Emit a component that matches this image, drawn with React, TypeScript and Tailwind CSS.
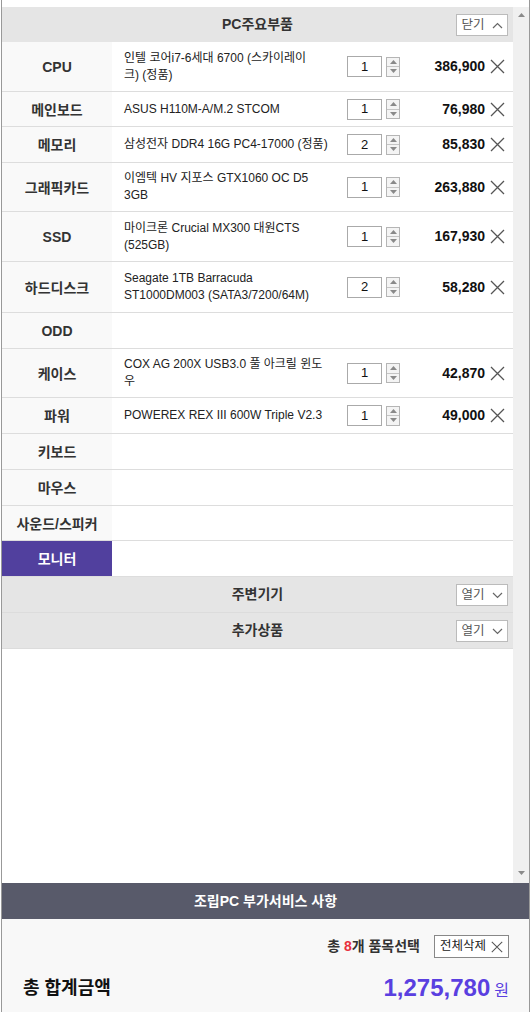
import React from "react";

type Part = {
  label: string;
  h: string;
  name?: string[];
  qty?: number;
  price?: string;
  active?: boolean;
};

const parts: Part[] = [
  { label: "CPU", h: "h-[50px]", name: ["인텔 코어i7-6세대 6700 (스카이레이", "크) (정품)"], qty: 1, price: "386,900" },
  { label: "메인보드", h: "h-[35px]", name: ["ASUS H110M-A/M.2 STCOM"], qty: 1, price: "76,980" },
  { label: "메모리", h: "h-[36px]", name: ["삼성전자 DDR4 16G PC4-17000 (정품)"], qty: 2, price: "85,830" },
  { label: "그래픽카드", h: "h-[49px]", name: ["이엠텍 HV 지포스 GTX1060 OC D5", "3GB"], qty: 1, price: "263,880" },
  { label: "SSD", h: "h-[50px]", name: ["마이크론 Crucial MX300 대원CTS", "(525GB)"], qty: 1, price: "167,930" },
  { label: "하드디스크", h: "h-[51px]", name: ["Seagate 1TB Barracuda", "ST1000DM003 (SATA3/7200/64M)"], qty: 2, price: "58,280" },
  { label: "ODD", h: "h-[36px]" },
  { label: "케이스", h: "h-[49px]", name: ["COX AG 200X USB3.0 풀 아크릴 윈도", "우"], qty: 1, price: "42,870" },
  { label: "파워", h: "h-[36px]", name: ["POWEREX REX III 600W Triple V2.3"], qty: 1, price: "49,000" },
  { label: "키보드", h: "h-[36px]" },
  { label: "마우스", h: "h-[36px]" },
  { label: "사운드/스피커", h: "h-[35px]" },
  { label: "모니터", h: "h-[36px]", active: true },
];

const CloseX = ({ size = 15 }: { size?: number }) => (
  <svg width={size} height={size} viewBox="0 0 15 15" fill="none">
    <path d="M1 1L14 14M14 1L1 14" stroke="#555" strokeWidth="1.3" />
  </svg>
);

const Chevron = ({ up }: { up?: boolean }) => (
  <svg width="11" height="7" viewBox="0 0 11 7" fill="none">
    <path d={up ? "M1 6L5.5 1.5L10 6" : "M1 1L5.5 5.5L10 1"} stroke="#666" strokeWidth="1.2" />
  </svg>
);

const Tri = ({ up }: { up?: boolean }) => (
  <svg width="7" height="4" viewBox="0 0 7 4">
    <path d={up ? "M0 4L3.5 0L7 4Z" : "M0 0L7 0L3.5 4Z"} fill="#8a8a8a" />
  </svg>
);

const ToggleButton = ({ text, up }: { text: string; up?: boolean }) => (
  <div className="flex items-center gap-[7px] h-[22px] w-[52px] justify-center border border-[#bbb] bg-white text-[12.5px] text-[#555]">
    <span>{text}</span>
    <Chevron up={up} />
  </div>
);

const Qty = ({ value }: { value: number }) => (
  <div className="flex items-center gap-[4px]">
    <div className="w-[35px] h-[21px] border border-[#aaa] bg-white flex items-center justify-center text-[13px] text-[#111]">
      {value}
    </div>
    <div className="w-[14px] h-[20px] border border-[#b5b5b5] bg-[#f4f4f4] flex flex-col">
      <div className="flex-1 flex items-center justify-center border-b border-[#c5c5c5]">
        <Tri up />
      </div>
      <div className="flex-1 flex items-center justify-center">
        <Tri />
      </div>
    </div>
  </div>
);

const PartRow = ({ part }: { part: Part }) => (
  <div className={`flex border-b border-[#ddd] ${part.h}`}>
    <div
      className={`w-[110px] shrink-0 flex items-center justify-center pt-[2px] text-[14px] font-bold ${
        part.active ? "bg-[#51409e] text-white" : "bg-[#f9f9f9] text-[#333]"
      }`}
    >
      {part.label}
    </div>
    {part.name && (
      <>
        <div className="w-[235px] shrink-0 pl-[12px] pr-[6px] flex flex-col justify-center text-[12px] leading-[17px] text-[#222] whitespace-nowrap">
          {part.name.map((line) => (
            <span key={line}>{line}</span>
          ))}
        </div>
        <Qty value={part.qty ?? 1} />
        <div className="flex-1 flex items-center justify-end text-[14px] font-bold text-[#111]">
          {part.price}
        </div>
        <div className="w-[28px] flex items-center justify-start pl-[5px]">
          <CloseX />
        </div>
      </>
    )}
  </div>
);

const SectionHeader = ({ title }: { title: string }) => (
  <div className="relative h-[36px] bg-[#e5e5e5] border-b border-[#dcdcdc] flex items-center justify-center">
    <span className="text-[14px] font-bold text-[#333]">{title}</span>
    <div className="absolute right-[5px] top-[7px]">
      <ToggleButton text="열기" />
    </div>
  </div>
);

export default function App() {
  return (
    <div
      className="w-[532px] h-[1012px] bg-white overflow-hidden"
      style={{ fontFamily: '"Liberation Sans", "Noto Sans CJK KR", sans-serif' }}
    >
      <div className="ml-[1px] w-[529px] h-[1012px] border-x border-[#999] flex flex-col pt-[7px]">
        <div className="flex h-[876px]">
          <div className="w-[511px] flex flex-col">
            <div className="relative h-[35px] bg-[#e5e5e5] flex items-center justify-center">
              <span className="text-[14px] font-bold text-[#333]">PC주요부품</span>
              <div className="absolute right-[5px] top-[7px]">
                <ToggleButton text="닫기" up />
              </div>
            </div>
            {parts.map((p) => (
              <PartRow key={p.label} part={p} />
            ))}
            <SectionHeader title="주변기기" />
            <SectionHeader title="추가상품" />
          </div>
          <div className="w-[16px] bg-[#f0f0f0] flex flex-col items-center justify-between pt-[6px] pb-[8px]">
            <Tri up />
            <Tri />
          </div>
        </div>
        <div className="h-[36px] bg-[#585a6a] flex items-center justify-center text-white text-[14px] font-bold">
          조립PC 부가서비스 사항
        </div>
        <div className="flex-1 bg-[#f8f8f8] pr-[20px] pl-[21px] pt-[16px]">
          <div className="flex items-center justify-end gap-[14px]">
            <span className="text-[14px] font-bold text-[#333]">
              총 <span className="text-[#e8313d]">8</span>개 품목선택
            </span>
            <div className="h-[23px] w-[75px] shrink-0 justify-center border border-[#888] bg-white flex items-center gap-[5px] text-[12.5px] text-[#222]">
              <span className="whitespace-nowrap">전체삭제</span>
              <CloseX size={12} />
            </div>
          </div>
          <div className="flex items-center justify-between mt-[12px]">
            <span className="text-[18px] font-bold text-[#111]">총 합계금액</span>
            <div className="flex items-baseline gap-[4px] text-[#5a3fe0]">
              <span className="text-[24px] font-bold">1,275,780</span>
              <span className="text-[16px]">원</span>
            </div>
          </div>
        </div>
      </div>
    </div>
  );
}
